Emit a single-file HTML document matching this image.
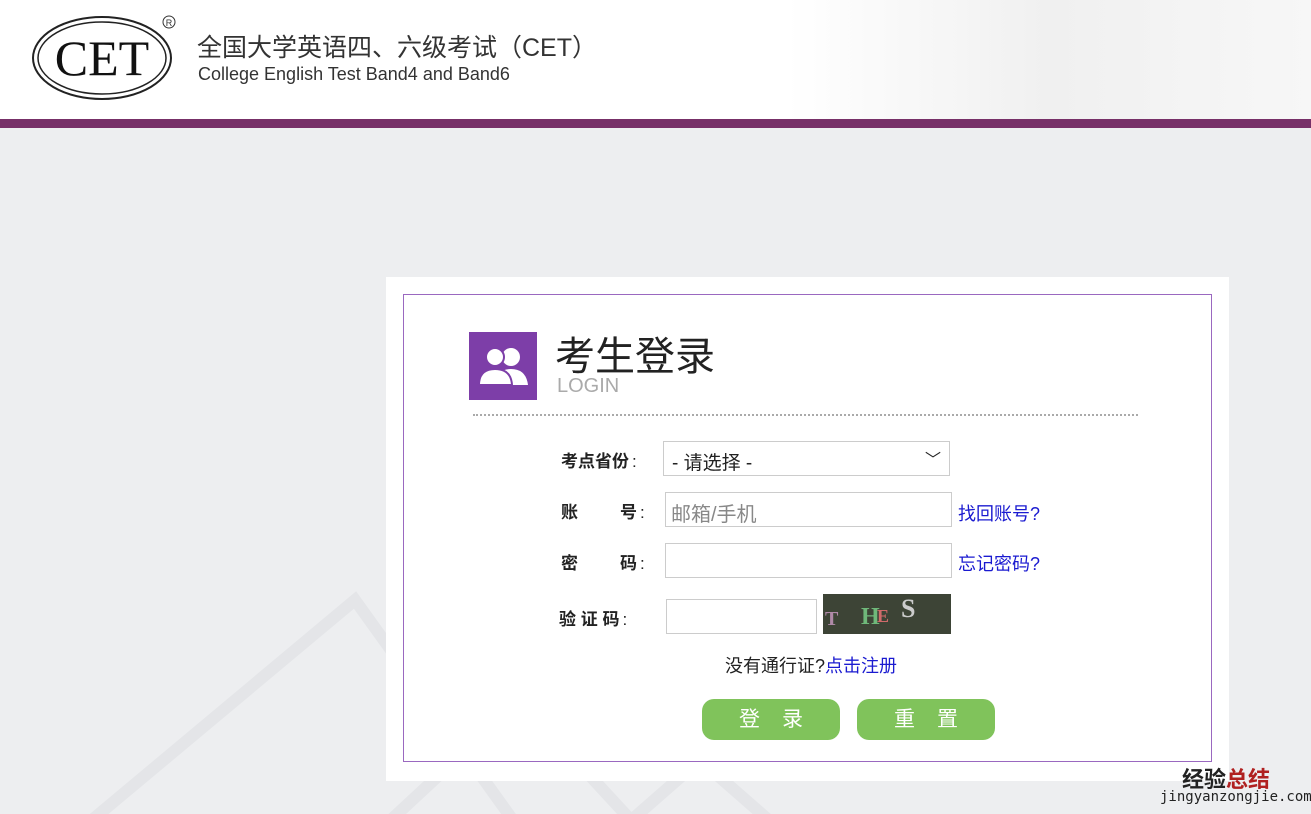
<!DOCTYPE html>
<html><head><meta charset="utf-8"><style>
body{margin:0;width:1311px;height:814px;overflow:hidden;background:#edeef0;font-family:"Liberation Sans","Noto Sans CJK SC",sans-serif;position:relative}
.hdr{position:absolute;left:0;top:0;width:1311px;height:119px;background:linear-gradient(90deg,#fff 0,#fff 60%,#f0f0f0 80%,#f7f7f7 100%)}
.bar{position:absolute;left:0;top:119px;width:1311px;height:9px;background:#773068}
.card{position:absolute;left:386px;top:277px;width:843px;height:504px;background:#fff}
.inner{position:absolute;left:403px;top:294px;width:807px;height:466px;border:1px solid #9a68c0}
.abs{position:absolute}
.lbl{position:absolute;font-size:17px;font-weight:bold;color:#222}
.inp{position:absolute;border:1px solid #ccc;background:#fff;box-sizing:border-box}
.lnk{position:absolute;font-size:18px;color:#1a1ad0}
.btn{position:absolute;width:138px;height:41px;border-radius:12px;background:#80c35b;color:#fff;font-size:21px;text-align:center;line-height:41px;letter-spacing:22px;text-indent:22px}
</style></head><body>
<div class="hdr"></div>
<svg class="abs" style="left:30px;top:12px" width="150" height="92"><ellipse cx="72" cy="46" rx="69" ry="41" fill="none" stroke="#222" stroke-width="2"/><ellipse cx="72" cy="46" rx="64" ry="36" fill="none" stroke="#222" stroke-width="1.5"/><text x="72" y="63" text-anchor="middle" font-family="Liberation Serif" font-size="50" fill="#111">CET</text><circle cx="139" cy="10" r="6" fill="none" stroke="#333"/><text x="139" y="14" text-anchor="middle" font-size="9" fill="#333">R</text></svg>
<div class="abs" style="left:197px;top:28px;font-size:25px;color:#333">全国大学英语四、六级考试（CET）</div>
<div class="abs" style="left:198px;top:64px;font-size:18px;color:#333">College English Test Band4 and Band6</div>
<div class="bar"></div>
<svg class="abs" style="left:0;top:560px" width="800" height="254"><g fill="none" stroke="#e4e5e8" stroke-width="12"><path d="M80 270 L355 40 L520 270"/><path d="M380 270 L520 140 L640 270"/><path d="M620 270 L700 200 L780 270"/></g></svg>
<div class="card"></div>
<div class="inner"></div>
<div class="abs" style="left:469px;top:332px;width:68px;height:68px;background:#7d3ea8"></div>
<svg class="abs" style="left:476px;top:345px" width="56" height="42"><g fill="#fff"><circle cx="35" cy="12" r="9"/><path d="M20 40 Q20 24 35 24 Q50 24 52 40Z"/><circle cx="19" cy="12" r="9" stroke="#7d3ea8" stroke-width="2"/><path d="M3 40 Q3 24 19 24 Q35 24 36 40Z" stroke="#7d3ea8" stroke-width="2"/></g></svg>
<div class="abs" style="left:555px;top:333px;font-size:40px;color:#222;line-height:48px">考生登录</div>
<div class="abs" style="left:557px;top:375px;font-size:20px;color:#aaa">LOGIN</div>
<div class="abs" style="left:473px;top:414px;width:665px;border-top:2px dotted #aaa"></div>
<div class="lbl" style="left:561px;top:447px">考点省份<span style="font-weight:normal;margin-left:3px">:</span></div>
<div class="inp" style="left:663px;top:441px;width:287px;height:35px;font-size:19px;padding:6px 8px;color:#222">- 请选择 -<span style="position:absolute;right:8px;top:4px;font-size:16px">﹀</span></div>
<div class="lbl" style="left:561px;top:498px">账<span style="margin-left:42px">号</span><span style="font-weight:normal;margin-left:3px">:</span></div>
<div class="inp" style="left:665px;top:492px;width:287px;height:35px;font-size:20px;padding:5px 5px;color:#888">邮箱/手机</div>
<div class="lnk" style="left:958px;top:500px">找回账号?</div>
<div class="lbl" style="left:561px;top:549px">密<span style="margin-left:42px">码</span><span style="font-weight:normal;margin-left:3px">:</span></div>
<div class="inp" style="left:665px;top:543px;width:287px;height:35px"></div>
<div class="lnk" style="left:958px;top:550px">忘记密码?</div>
<div class="lbl" style="left:559px;top:605px">验 证 码<span style="font-weight:normal;margin-left:3px">:</span></div>
<div class="inp" style="left:666px;top:599px;width:151px;height:35px"></div>
<div class="abs" style="left:823px;top:594px;width:128px;height:40px;background:#3d4436;font-family:'Liberation Serif';font-weight:bold"><span style="position:absolute;left:2px;top:14px;color:#b08aa8;font-size:20px">T</span><span style="position:absolute;left:38px;top:10px;color:#6fb87a;font-size:24px">H</span><span style="position:absolute;left:54px;top:12px;color:#d06a6a;font-size:18px">E</span><span style="position:absolute;left:78px;top:0;color:#ccc;font-size:26px">S</span></div>
<div class="abs" style="left:725px;top:652px;font-size:18px;color:#222">没有通行证?<span style="color:#1a1ad0">点击注册</span></div>
<div class="btn" style="left:702px;top:699px">登录</div>
<div class="btn" style="left:857px;top:699px">重置</div>
<div class="abs" style="left:1182px;top:762px;font-size:22px;font-weight:bold;color:#222">经验<span style="color:#b02020">总结</span></div>
<div class="abs" style="left:1160px;top:789px;font-size:14px;color:#222;font-family:'DejaVu Sans Mono',monospace">jingyanzongjie.com</div>
</body></html>
